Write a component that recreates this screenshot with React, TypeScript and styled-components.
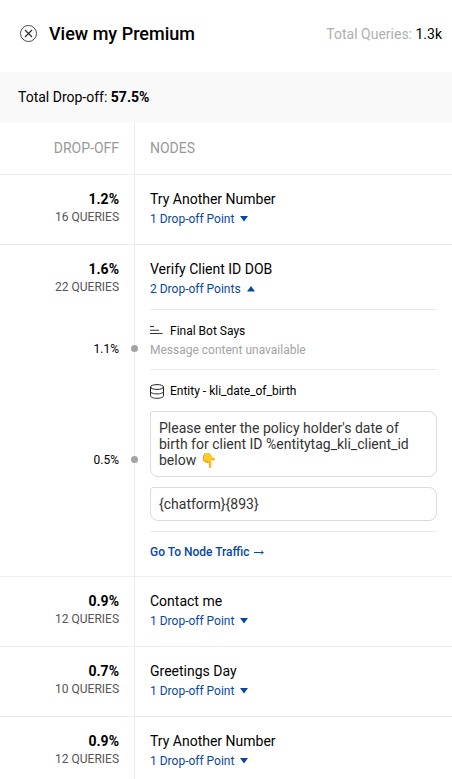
import React from 'react';
import styled, { createGlobalStyle } from 'styled-components';

const GlobalStyle = createGlobalStyle`
  *, *::before, *::after { box-sizing: border-box; }
  body {
    margin: 0;
    background: #fff;
    color: #000;
    font-family: Roboto, "Liberation Sans", sans-serif;
    font-size: 14px;
    line-height: 18px;
  }
`;

const Panel = styled.main`
  width: 100%;
  height: 779px;
  overflow: hidden;
  background: #fff;
`;

const Header = styled.header`
  display: flex;
  align-items: center;
  height: 72px;
  padding: 0 10px 5px 20px;
`;

const CloseButton = styled.button`
  display: flex;
  width: 17px;
  height: 17px;
  margin: 0 12px 0 0;
  padding: 0;
  border: 0;
  background: none;
`;

const Title = styled.h1`
  margin: 0;
  font-size: 18px;
  font-weight: 500;
  line-height: 24px;
`;

const Total = styled.div`
  margin-left: auto;
  color: #b0b0b0;
  span { color: #000; }
`;

const Summary = styled.div`
  height: 51px;
  padding: 16px 18px;
  background: #f9f9f9;
  b { font-weight: 700; }
`;

const Row = styled.section`
  display: grid;
  grid-template-columns: 135px 1fr;
  border-bottom: 1px solid #ececec;
`;

const DropCell = styled.div<{ $heading?: boolean }>`
  padding: ${p => (p.$heading ? '16px 15px 17px 0' : '15px 15px 0 0')};
  border-right: 1px solid #ececec;
  text-align: right;
  ${p => p.$heading && 'color: #999;'}
`;

const NodeCell = styled.div<{ $heading?: boolean; $open?: boolean }>`
  padding: ${p => (p.$heading ? '16px 15px 17px' : '15px 15px 0')};
  ${p => !p.$heading && `height: ${p.$open ? 64 : 69}px;`}
  ${p => p.$heading && 'color: #999;'}
`;

const Percent = styled.div`
  font-weight: 700;
`;

const Queries = styled.div`
  color: #555;
  font-size: 12px;
`;

const Toggle = styled.button`
  display: flex;
  align-items: center;
  height: 17px;
  margin: 3px 0 0;
  padding: 0;
  border: 0;
  background: none;
  color: #0747a6;
  font: 400 12px/17px Roboto, sans-serif;
  svg { margin: 0 0 1px 6px; }
`;

const PointDrop = styled.div`
  position: relative;
  display: flex;
  align-items: center;
  justify-content: flex-end;
  padding: 20px 15px 0 0;
  border-right: 1px solid #ececec;
  font-size: 12px;
  &::after {
    content: '';
    position: absolute;
    right: -4px;
    top: calc(50% + 6px);
    width: 7px;
    height: 7px;
    border-radius: 50%;
    background: #a3a3a3;
  }
`;

const PointBody = styled.div`
  margin: 0 15px;
  padding: 12px 0 10px;
  border-top: 1px solid #ececec;
`;

const PointTitle = styled.div`
  display: flex;
  align-items: center;
  height: 18px;
  font-size: 12px;
  svg { margin-right: 6px; }
`;

const Muted = styled.div`
  margin-top: 1px;
  color: #a3a3a3;
  font-size: 12px;
`;

const Messages = styled.div`
  display: grid;
  gap: 10px;
  margin-top: 11px;
`;

const Message = styled.div`
  padding: 8px;
  border: 1px solid #dcdcdc;
  border-radius: 3px 8px 8px 8px;
  color: #333;
  line-height: 16px;
`;

const Spacer = styled.div`
  border-right: 1px solid #ececec;
`;

const LinkBox = styled.div`
  margin: 0 15px;
  padding: 11px 0 15px;
  border-top: 1px solid #ececec;
`;

const TrafficLink = styled.a`
  display: flex;
  align-items: center;
  gap: 4px;
  color: #0747a6;
  font-size: 12px;
  font-weight: 500;
`;

const Caret = ({ up }: { up?: boolean }) => (
  <svg width="8" height="6" viewBox="0 0 8 6" aria-hidden="true">
    <path d={up ? 'M0 5.500 4 0l4 5.500z' : 'M0 0h8L4 5.500z'} fill="#0747a6" />
  </svg>
);

const ArrowIcon = () => (
  <svg width="10" height="7" viewBox="0 0 10 7" fill="none" stroke="#0747a6" aria-hidden="true">
    <path d="M0 3.500h9M7.200 1.500l2 2-2 2" />
  </svg>
);

const CloseIcon = () => (
  <svg width="17" height="17" viewBox="0 0 17 17" fill="none" stroke="#333" aria-hidden="true">
    <circle cx="8.5" cy="8.5" r="8" strokeWidth="0.9" />
    <path d="m5 5 7 7m0-7-7 7" strokeWidth="1.3" />
  </svg>
);

const LinesIcon = () => (
  <svg width="14" height="12" viewBox="0 0 14 12" stroke="#333" aria-hidden="true">
    <path d="M0 1.500h4M0 5.200h9M0 8.500h12.500" strokeWidth="1.1" />
  </svg>
);

const DatabaseIcon = () => (
  <svg width="14" height="15" viewBox="0 0 14 15" fill="none" stroke="#222" aria-hidden="true">
    <ellipse cx="7" cy="3" rx="6.5" ry="2.4" />
    <path d="M.5 3v8.800c0 1.400 2.900 2.500 6.500 2.500s6.500-1.100 6.500-2.500V3M.5 7.400c0 1.400 2.900 2.500 6.500 2.500s6.500-1.100 6.500-2.500" />
  </svg>
);

type NodeRowProps = {
  percent: string;
  queries: number;
  name: string;
  points: number;
  open?: boolean;
  children?: React.ReactNode;
};

const NodeRow = ({ percent, queries, name, points, open, children }: NodeRowProps) => (
  <Row>
    <DropCell>
      <Percent>{percent}</Percent>
      <Queries>{queries} QUERIES</Queries>
    </DropCell>
    <NodeCell $open={open}>
      <div>{name}</div>
      <Toggle>
        {points} Drop-off Point{points > 1 ? 's' : ''}
        <Caret up={open} />
      </Toggle>
    </NodeCell>
    {children}
  </Row>
);

export default function App() {
  return (
    <>
      <GlobalStyle />
      <Panel>
        <Header>
          <CloseButton aria-label="Close"><CloseIcon /></CloseButton>
          <Title>View my Premium</Title>
          <Total>Total Queries: <span>1.3k</span></Total>
        </Header>
        <Summary>Total Drop-off: <b>57.5%</b></Summary>
        <Row>
          <DropCell $heading>DROP-OFF</DropCell>
          <NodeCell $heading>NODES</NodeCell>
        </Row>
        <NodeRow percent="1.2%" queries={16} name="Try Another Number" points={1} />
        <NodeRow percent="1.6%" queries={22} name="Verify Client ID DOB" points={2} open>
          <PointDrop>1.1%</PointDrop>
          <PointBody>
            <PointTitle><LinesIcon />Final Bot Says</PointTitle>
            <Muted>Message content unavailable</Muted>
          </PointBody>
          <PointDrop>0.5%</PointDrop>
          <PointBody>
            <PointTitle><DatabaseIcon />Entity - kli_date_of_birth</PointTitle>
            <Messages>
              <Message>
                Please enter the policy holder's date of birth for client ID %entitytag_kli_client_id below 👇
              </Message>
              <Message>{'{chatform}{893}'}</Message>
            </Messages>
          </PointBody>
          <Spacer />
          <LinkBox><TrafficLink>Go To Node Traffic <ArrowIcon /></TrafficLink></LinkBox>
        </NodeRow>
        <NodeRow percent="0.9%" queries={12} name="Contact me" points={1} />
        <NodeRow percent="0.7%" queries={10} name="Greetings Day" points={1} />
        <NodeRow percent="0.9%" queries={12} name="Try Another Number" points={1} />
      </Panel>
    </>
  );
}
